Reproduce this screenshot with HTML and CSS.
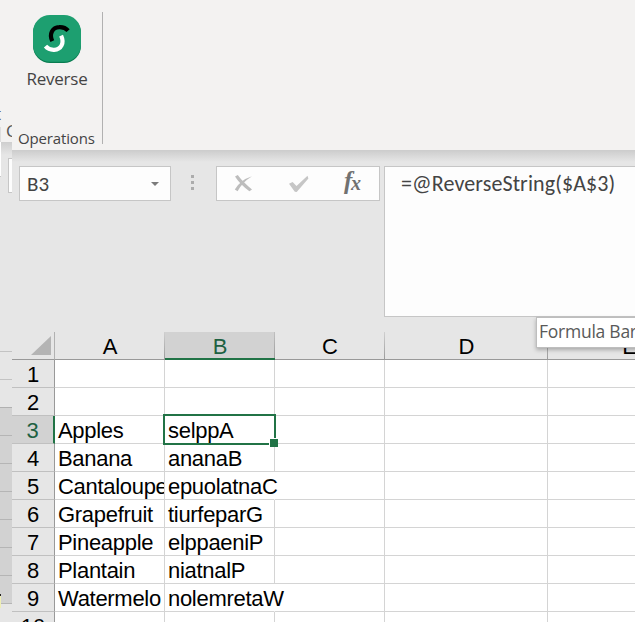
FILE: index.html
```html
<!DOCTYPE html>
<html lang="en">
<head>
<meta charset="utf-8">
<title>Reverse</title>
<link rel="stylesheet" href="styles.css">
</head>
<body>
<div class="app">
  <aside class="behind">
    <div class="behind-ribbon"><span class="bit-t">t</span><span class="bit-c">C</span><i class="edge"></i></div>
    <div class="behind-bar"><i class="edge"></i><i class="box"></i></div>
    <div class="behind-heads"></div>
    <div class="behind-selected"><i class="mark"></i></div>
  </aside>
  <main class="window">
    <header class="ribbon">
      <section class="group">
        <button class="command">
          <svg width="48" height="48" viewBox="0 0 48 48">
            <rect y="1" width="48" height="47" rx="17" fill="#087c50"/>
            <rect width="48" height="46.7" rx="17" fill="#1d9f70"/>
            <path d="M19.3 26.2C15.8 19 19.5 12.4 26.2 12.2C30 12 32.8 13 35.1 15.7" fill="none" stroke="#000" stroke-width="4.2"/>
            <path d="M28.1 20.6C31.6 28 28.2 34.6 21.2 34.8C17.4 35 14.8 34 12.5 31.2" fill="none" stroke="#fff" stroke-width="4.2"/>
          </svg>
          <span class="command-label">Reverse</span>
        </button>
        <span class="group-label">Operations</span>
      </section>
    </header>
    <div class="formula-row">
      <div class="name-box"><span>B3</span><i class="caret"></i></div>
      <div class="grip"><i></i><i></i><i></i></div>
      <div class="actions">
        <svg width="162" height="33" viewBox="0 0 162 33">
          <path d="M18 9.5L20.8 8Q25.8 15 35 22.4L32.4 24.2Q23 17.5 18 9.5Z" fill="#bdbdbd"/>
          <path d="M35 9.2Q25 15.5 20.6 24.2L17.8 22.4Q23.2 13 35 9.2Z" fill="#bdbdbd"/>
          <path d="M72 16.8L75.6 15L79.5 19L90.5 8.7L91.4 11.5L79.7 25L77.8 24.8Z" fill="#c6c6c6"/>
          <text x="127" y="22" class="fx-f">f</text><text x="134" y="23" class="fx-x">x</text>
        </svg>
      </div>
      <div class="formula">=@ReverseString($A$3)</div>
      <div class="tooltip">Formula Bar</div>
    </div>
    <div class="sheet">
      <div class="corner"><svg width="20" height="19"><path d="M0 19L20 0V19Z" fill="#b4b4b4"/></svg></div>
      <div class="col">A</div><div class="col active">B</div><div class="col">C</div><div class="col">D</div><div class="col last">E</div>
      <div class="row">1</div><div class="cell"></div><div class="cell"></div><div class="cell"></div><div class="cell"></div><div class="cell"></div>
      <div class="row">2</div><div class="cell"></div><div class="cell"></div><div class="cell"></div><div class="cell"></div><div class="cell"></div>
      <div class="row active">3</div><div class="cell">Apples</div><div class="cell selected">selppA</div><div class="cell"></div><div class="cell"></div><div class="cell"></div>
      <div class="row">4</div><div class="cell">Banana</div><div class="cell">ananaB</div><div class="cell"></div><div class="cell"></div><div class="cell"></div>
      <div class="row">5</div><div class="cell">Cantaloupe</div><div class="cell spill">epuolatnaC</div><div class="cell"></div><div class="cell"></div><div class="cell"></div>
      <div class="row">6</div><div class="cell">Grapefruit</div><div class="cell">tiurfeparG</div><div class="cell"></div><div class="cell"></div><div class="cell"></div>
      <div class="row">7</div><div class="cell">Pineapple</div><div class="cell">elppaeniP</div><div class="cell"></div><div class="cell"></div><div class="cell"></div>
      <div class="row">8</div><div class="cell">Plantain</div><div class="cell">niatnalP</div><div class="cell"></div><div class="cell"></div><div class="cell"></div>
      <div class="row">9</div><div class="cell">Watermelo</div><div class="cell spill">nolemretaW</div><div class="cell"></div><div class="cell"></div><div class="cell"></div>
      <div class="row">10</div><div class="cell"></div><div class="cell"></div><div class="cell"></div><div class="cell"></div><div class="cell"></div>
    </div>
  </main>
</div>
</body>
</html>
```

FILE: styles.css
```css
* { box-sizing: border-box; }
body { margin: 0; overflow: hidden; }
.app {
  display: grid;
  grid-template-columns: 12px 623px;
  width: 635px;
  height: 622px;
  overflow: hidden;
  background: #e6e6e6;
}

/* Strip of the window behind */
.behind { font-family: "Open Sans", sans-serif; color: #555; overflow: hidden; }
.behind-ribbon { position: relative; height: 142px; background: #f3f2f1; overflow: hidden; }
.bit-t, .bit-c { position: absolute; font-size: 17px; line-height: 20px; }
.bit-t { left: -5px; top: 104px; }
.bit-c { left: 6px; top: 121px; }
.behind-ribbon .edge { position: absolute; left: 0; bottom: 0; width: 1px; height: 15px; background: #dedede; }
.behind-bar { position: relative; height: 190px; background: linear-gradient(#cecece, #e6e6e6 13px); }
.behind-bar .edge { position: absolute; left: 0; top: 0; width: 1px; height: 35px; background: #fff; border-bottom: 1px solid #c6c6c6; }
.behind-bar .box { position: absolute; left: 8px; top: 16px; width: 10px; height: 35px; background: #fdfdfd; border: 1px solid #c6c6c6; }
.behind-heads { height: 75px; background: repeating-linear-gradient(#e6e6e6 0 19px, #c3c3c3 19px 20px, #e6e6e6 20px 28px); }
.behind-selected {
  position: relative;
  height: 197px;
  border-top: 1px solid #b1b1b1;
  background: repeating-linear-gradient(#d2d2d2 0 27px, #b5b5b5 27px 28px);
}
.mark { position: absolute; left: 0; bottom: -4px; width: 1px; height: 14px; background: #efefb5; border-top: 2px solid #222; }

/* Ribbon */
.window { display: flex; flex-direction: column; overflow: hidden; }
.ribbon { flex: none; height: 150px; padding-top: 12px; background: #f3f2f1; }
.group {
  display: flex;
  flex-direction: column;
  justify-content: space-between;
  width: 91px;
  height: 132px;
  padding-top: 3px;
  border-right: 1px solid #b1b1b1;
  color: #444;
  font-family: "Open Sans", sans-serif;
}
.command {
  display: flex;
  flex-direction: column;
  align-items: center;
  padding: 0;
  border: 0;
  background: none;
  color: inherit;
  font: 17px/22px "Open Sans", sans-serif;
}
.command svg { display: block; }
.command-label { margin-top: 5px; letter-spacing: -.25px; }
.group-label { padding-left: 6px; font-size: 15px; line-height: 20px; letter-spacing: -.15px; margin-bottom: -4px; white-space: nowrap; }

/* Formula row */
.formula-row {
  position: relative;
  display: flex;
  align-items: flex-start;
  flex: none;
  height: 182px;
  padding: 16px 0 0 7px;
  background: linear-gradient(#cccccc, #e6e6e6 12px);
}
.name-box {
  display: flex;
  align-items: center;
  justify-content: space-between;
  width: 152px;
  height: 35px;
  padding: 1px 11px 0 7px;
  border: 1px solid #c6c6c6;
  background: #fdfdfd;
  color: #444;
  font: 21px/30px Carlito, Lato, sans-serif;
}
.caret { border: 4.5px solid transparent; border-top-color: #7b7b7b; border-bottom: 0; }
.grip { display: flex; flex-direction: column; gap: 3px; width: 45px; padding: 9px 0 0 20px; }
.grip i { width: 3px; height: 3px; background: #acacac; }
.actions { width: 164px; height: 35px; border: 1px solid #c6c6c6; background: #fdfdfd; }
.actions svg { display: block; }
.fx-f, .fx-x { font-family: "Liberation Serif", serif; font-style: italic; font-weight: bold; fill: #717171; }
.fx-f { font-size: 25px; }
.fx-x { font-size: 20px; }
.formula {
  width: 251px;
  height: 151px;
  margin-left: 4px;
  padding: 2px 0 0 16px;
  border: 1px solid #c6c6c6;
  border-right: 0;
  background: #fdfdfd;
  color: #444;
  font: 22px/30px Carlito, Lato, sans-serif;
  letter-spacing: .1px;
  white-space: nowrap;
}
.tooltip {
  position: absolute;
  z-index: 3;
  left: 524px;
  top: 167px;
  width: 110px;
  height: 31px;
  padding-left: 2px;
  border: 1px solid #bebebe;
  background: #fff;
  box-shadow: 0 2px 4px #0004;
  color: #595959;
  font: 17.5px/27px "Open Sans", sans-serif;
  letter-spacing: -.25px;
  white-space: nowrap;
}

/* Worksheet */
.sheet {
  display: grid;
  grid-template-columns: 43px 110px 110px 110px 163px 163px;
  grid-template-rows: 28px repeat(10, 28px);
  color: #000;
  font: 22px/28px "Liberation Sans", Arial, sans-serif;
}
.corner { display: flex; justify-content: flex-end; padding: 4px 3px 0 0; background: #e6e6e6; border-bottom: 1px solid #999; border-right: 1px solid #b1b1b1; }
.col {
  background:
    linear-gradient(#999, #999) bottom / 100% 1px no-repeat,
    linear-gradient(#d0d0d0, #999) right / 1px 100% no-repeat,
    #e6e6e6;
  text-align: center;
  line-height: 29px;
}
.col.active {
  background:
    linear-gradient(#217346, #217346) bottom / 100% 2px no-repeat,
    linear-gradient(#c0c0c0, #999) right / 1px 100% no-repeat,
    #d2d2d2;
  color: #1e6142;
}
.row { border-right: 1px solid #999; border-bottom: 1px solid #c0c0c0; background: #e6e6e6; text-align: center; line-height: 29px; }
.row.active { background: #d2d2d2; color: #1e6142; border-right: 2px solid #217346; }
.cell { height: 28px; padding-left: 3px; border-right: 1px solid #d4d4d4; border-bottom: 1px solid #d4d4d4; background: #fff; line-height: 29px; letter-spacing: -.3px; white-space: nowrap; overflow: hidden; }
.spill { position: relative; z-index: 1; overflow: visible; border-right-color: #fff; }
.selected { position: relative; z-index: 2; margin: -2px -1px -1px -2px; height: 31px; padding: 1px 0 0 3px; border: 2px solid #217346; overflow: visible; line-height: 27px; }
.selected::after { content: ""; position: absolute; right: -4px; bottom: -4px; width: 8px; height: 8px; background: #217346; border: solid #fff; border-width: 1px 0 0 1px; }
```
